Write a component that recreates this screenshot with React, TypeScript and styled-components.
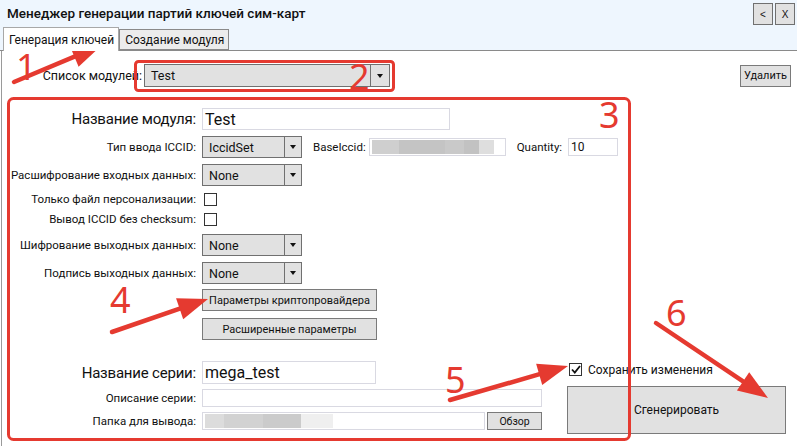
import React from 'react';
import styled, { createGlobalStyle } from 'styled-components';

const RED = '#e53a30';
const UI_FONT = '"Roboto", "Liberation Sans", sans-serif';

const GlobalStyle = createGlobalStyle`
  html, body {
    margin: 0;
    padding: 0;
    background: #ffffff;
  }
  body {
    font-family: ${UI_FONT};
    font-size: 11.5px;
    color: #111;
  }
`;

const Window = styled.div`
  position: relative;
  width: 797px;
  height: 446px;
  overflow: hidden;
  background: #fff;
`;

const Header = styled.div`
  display: flex;
  flex-direction: column;
  height: 50px;
  background: #eef6fe;
  border-bottom: 1px solid #8a8a8a;
`;

const TitleRow = styled.div`
  display: flex;
  align-items: flex-start;
  height: 28px;
`;

const Title = styled.h1`
  margin: 5px 0 0 7px;
  font-size: 13.5px;
  font-weight: 500;
  color: #111;
  flex: 1;
`;

const WinButton = styled.button`
  width: 20px;
  height: 22px;
  margin: 3px 2px 0 0;
  padding: 0;
  background: #e1e1e1;
  border: 1px solid #707070;
  font-family: "Liberation Sans", sans-serif;
  font-size: 10px;
  color: #111;
`;

const TabStrip = styled.div`
  display: flex;
  align-items: flex-end;
  height: 22px;
  padding-left: 3px;
`;

const Tab = styled.div<{ $active?: boolean }>`
  display: flex;
  align-items: center;
  padding: 0 4px 0 5px;
  height: ${p => (p.$active ? '23px' : '19px')};
  margin-bottom: ${p => (p.$active ? '-1px' : '0')};
  background: ${p => (p.$active ? '#ffffff' : '#ececec')};
  border: 1px solid ${p => (p.$active ? '#a8a8a8' : '#8a8a8a')};
  border-bottom: ${p => (p.$active ? 'none' : '1px solid #8a8a8a')};
  font-size: 12px;
  white-space: nowrap;
  position: relative;
  z-index: 1;
`;

const Content = styled.div`
  display: flex;
  flex-direction: column;
  height: 395px;
  border-left: 1px solid #9a9a9a;
  margin-left: 1px;
`;

const TopRow = styled.div`
  display: flex;
  align-items: center;
  height: 23px;
  margin-top: 13px;
`;

const TopLabel = styled.span`
  width: 140px;
  text-align: right;
  white-space: nowrap;
  font-size: 12.5px;
`;

const Spacer = styled.div`
  flex: 1;
`;

const Label = styled.span<{ $big?: boolean }>`
  width: 200px;
  flex-shrink: 0;
  text-align: right;
  padding-right: 6px;
  box-sizing: border-box;
  font-size: ${p => (p.$big ? '15px' : '11.5px')};
  letter-spacing: ${p => (p.$big ? '-0.2px' : '0')};
  white-space: nowrap;
`;

const InlineLabel = styled.span<{ $ml: number; $mr: number }>`
  margin-left: ${p => p.$ml}px;
  margin-right: ${p => p.$mr}px;
  white-space: nowrap;
`;

const Form = styled.div`
  display: flex;
  flex-direction: column;
  margin-top: 21px;
`;

const Row = styled.div<{ $h: number; $mt: number }>`
  display: flex;
  align-items: center;
  height: ${p => p.$h}px;
  margin-top: ${p => p.$mt}px;
`;

const Combo = styled.div<{ $w: number; $h?: number }>`
  display: flex;
  align-items: stretch;
  width: ${p => p.$w}px;
  height: ${p => p.$h ?? 22}px;
  box-sizing: border-box;
  background: #e1e1e1;
  border: 1px solid #707070;
`;

const ComboText = styled.span`
  flex: 1;
  display: flex;
  align-items: center;
  padding-left: 6px;
  font-size: 12.5px;
`;

const ComboArrow = styled.span<{ $w?: number }>`
  width: ${p => p.$w ?? 16}px;
  display: flex;
  align-items: center;
  justify-content: center;
  border-left: 1px solid #707070;
  &::after {
    content: '';
    border-left: 3.5px solid transparent;
    border-right: 3.5px solid transparent;
    border-top: 4px solid #111;
  }
`;

const Input = styled.div<{ $w: number; $h: number; $big?: boolean }>`
  display: flex;
  align-items: center;
  width: ${p => p.$w}px;
  height: ${p => p.$h}px;
  box-sizing: border-box;
  padding-left: 2px;
  background: #fff;
  border: 1px solid #d9d9e2;
  font-size: ${p => (p.$big ? '16px' : '12px')};
  overflow: hidden;
  white-space: nowrap;
`;

const Blur = styled.div<{ $w: number; $stops: string }>`
  width: ${p => p.$w}px;
  height: calc(100% - 2px);
  background: linear-gradient(to right, ${p => p.$stops});
`;

const CheckBox = styled.span<{ $checked?: boolean }>`
  display: inline-flex;
  align-items: center;
  justify-content: center;
  width: 13px;
  height: 13px;
  box-sizing: border-box;
  border: 1px solid #333;
  background: #fff;
  margin-left: 2px;
  svg {
    display: ${p => (p.$checked ? 'block' : 'none')};
  }
`;

const Button = styled.button<{ $w: number; $h: number; $fs?: number }>`
  width: ${p => p.$w}px;
  height: ${p => p.$h}px;
  padding: 0;
  background: #e1e1e1;
  border: 1px solid #7a7a7a;
  font-family: ${UI_FONT};
  font-size: ${p => p.$fs ?? 11}px;
  white-space: nowrap;
  color: #111;
`;

const Bottom = styled.div`
  display: flex;
  margin-top: 21px;
`;

const BottomLeft = styled.div`
  width: 565px;
  display: flex;
  flex-direction: column;
`;

const BottomRight = styled.div`
  display: flex;
  flex-direction: column;
  padding-top: 1px;
`;

const SaveRow = styled.label`
  display: flex;
  align-items: center;
  gap: 6px;
  font-size: 12px;
  height: 15px;
  white-space: nowrap;
`;

const Overlay = styled.svg`
  position: absolute;
  left: 0;
  top: 0;
  pointer-events: none;
`;

const Num = styled.text`
  font-family: "Noto Sans", sans-serif;
  font-size: 36px;
  fill: ${RED};
`;

type Pt = [number, number];

const Arrow: React.FC<{ from: Pt; to: Pt }> = ({ from, to }) => {
  const dx = to[0] - from[0];
  const dy = to[1] - from[1];
  const len = Math.hypot(dx, dy);
  const ux = dx / len;
  const uy = dy / len;
  const head = 30;
  const half = 11;
  const bx = to[0] - ux * head;
  const by = to[1] - uy * head;
  const p1 = `${bx - uy * half},${by + ux * half}`;
  const p2 = `${bx + uy * half},${by - ux * half}`;
  return (
    <g>
      <line x1={from[0]} y1={from[1]} x2={bx + ux * 4} y2={by + uy * 4} stroke={RED} strokeWidth={4.5} strokeLinecap="round" />
      <polygon points={`${to[0]},${to[1]} ${p1} ${p2}`} fill={RED} />
    </g>
  );
};

const Select: React.FC<{ value: string; w: number }> = ({ value, w }) => (
  <Combo $w={w}>
    <ComboText>{value}</ComboText>
    <ComboArrow />
  </Combo>
);

const Check = ({ checked }: { checked?: boolean }) => (
  <CheckBox $checked={checked}>
    <svg width="10" height="9" viewBox="0 0 10 9">
      <path d="M1 4.5 L3.8 7.5 L9 1" fill="none" stroke="#111" strokeWidth="1.8" />
    </svg>
  </CheckBox>
);

const App: React.FC = () => {
  return (
    <>
      <GlobalStyle />
      <Window>
        <Header>
          <TitleRow>
            <Title>Менеджер генерации партий ключей сим-карт</Title>
            <WinButton>&lt;</WinButton>
            <WinButton>X</WinButton>
          </TitleRow>
          <TabStrip>
            <Tab $active>Генерация ключей</Tab>
            <Tab>Создание модуля</Tab>
          </TabStrip>
        </Header>

        <Content>
          <TopRow>
            <TopLabel>Список модулей:</TopLabel>
            <Combo $w={246} $h={23} style={{ marginLeft: 2 }}>
              <ComboText>Test</ComboText>
              <ComboArrow $w={18} />
            </Combo>
            <Spacer />
            <Button $w={51} $h={22} style={{ marginRight: 6 }}>Удалить</Button>
          </TopRow>

          <Form>
            <Row $h={22} $mt={0}>
              <Label $big>Название модуля:</Label>
              <Input $w={248} $h={22} $big>Test</Input>
            </Row>
            <Row $h={22} $mt={6}>
              <Label>Тип ввода ICCID:</Label>
              <Select value="IccidSet" w={100} />
              <InlineLabel $ml={11} $mr={3}>BaseIccid:</InlineLabel>
              <Input $w={137} $h={18}>
                <Blur $w={122} $stops="#cfcfcf 0 22%, #c4c4c4 22% 60%, #c9c9c9 60% 75%, #c2c2c2 75% 88%, #dedede 88%" />
              </Input>
              <InlineLabel $ml={11} $mr={6}>Quantity:</InlineLabel>
              <Input $w={50} $h={18}>10</Input>
            </Row>
            <Row $h={22} $mt={6}>
              <Label>Расшифрование входных данных:</Label>
              <Select value="None" w={100} />
            </Row>
            <Row $h={18} $mt={4}>
              <Label>Только файл персонализации:</Label>
              <Check />
            </Row>
            <Row $h={18} $mt={2}>
              <Label>Вывод ICCID без checksum:</Label>
              <Check />
            </Row>
            <Row $h={22} $mt={6}>
              <Label>Шифрование выходных данных:</Label>
              <Select value="None" w={100} />
            </Row>
            <Row $h={22} $mt={6}>
              <Label>Подпись выходных данных:</Label>
              <Select value="None" w={100} />
            </Row>
            <Row $h={22} $mt={5}>
              <Label />
              <Button $w={175} $h={22}>Параметры криптопровайдера</Button>
            </Row>
            <Row $h={22} $mt={7}>
              <Label />
              <Button $w={175} $h={22}>Расширенные параметры</Button>
            </Row>

            <Bottom>
              <BottomLeft>
                <Row $h={23} $mt={0}>
                  <Label $big>Название серии:</Label>
                  <Input $w={174} $h={23} $big>mega_test</Input>
                </Row>
                <Row $h={18} $mt={5}>
                  <Label>Описание серии:</Label>
                  <Input $w={340} $h={18} />
                </Row>
                <Row $h={18} $mt={5}>
                  <Label>Папка для вывода:</Label>
                  <Input $w={283} $h={18}>
                    <Blur $w={128} $stops="#dcdcdc 0 15%, #d2d2d2 15% 45%, #cbcbcb 45% 75%, #efefef 75%" />
                  </Input>
                  <Button $w={55} $h={18} $fs={10.5} style={{ marginLeft: 2 }}>Обзор</Button>
                </Row>
              </BottomLeft>
              <BottomRight>
                <SaveRow>
                  <Check checked />
                  Сохранить изменения
                </SaveRow>
                <Button $w={219} $h={48} $fs={12} style={{ marginTop: 9 }}>Сгенерировать</Button>
              </BottomRight>
            </Bottom>
          </Form>
        </Content>

        <Overlay width={797} height={446} viewBox="0 0 797 446">
          <rect x={135.5} y={61.5} width={258} height={29} rx={3} fill="none" stroke={RED} strokeWidth={3} />
          <rect x={8.5} y={98.5} width={621} height={341} rx={5} fill="none" stroke={RED} strokeWidth={3} />
          <Num x={16} y={80}>1</Num>
          <Num x={349} y={90}>2</Num>
          <Num x={599} y={128}>3</Num>
          <Num x={110} y={313}>4</Num>
          <Num x={445} y={393}>5</Num>
          <Num x={666} y={326}>6</Num>
          <Arrow from={[14, 82]} to={[102, 45]} />
          <Arrow from={[112, 332]} to={[208, 299]} />
          <Arrow from={[450, 400]} to={[568, 366]} />
          <Arrow from={[656, 323]} to={[768, 398]} />
        </Overlay>
      </Window>
    </>
  );
};

export default App;
